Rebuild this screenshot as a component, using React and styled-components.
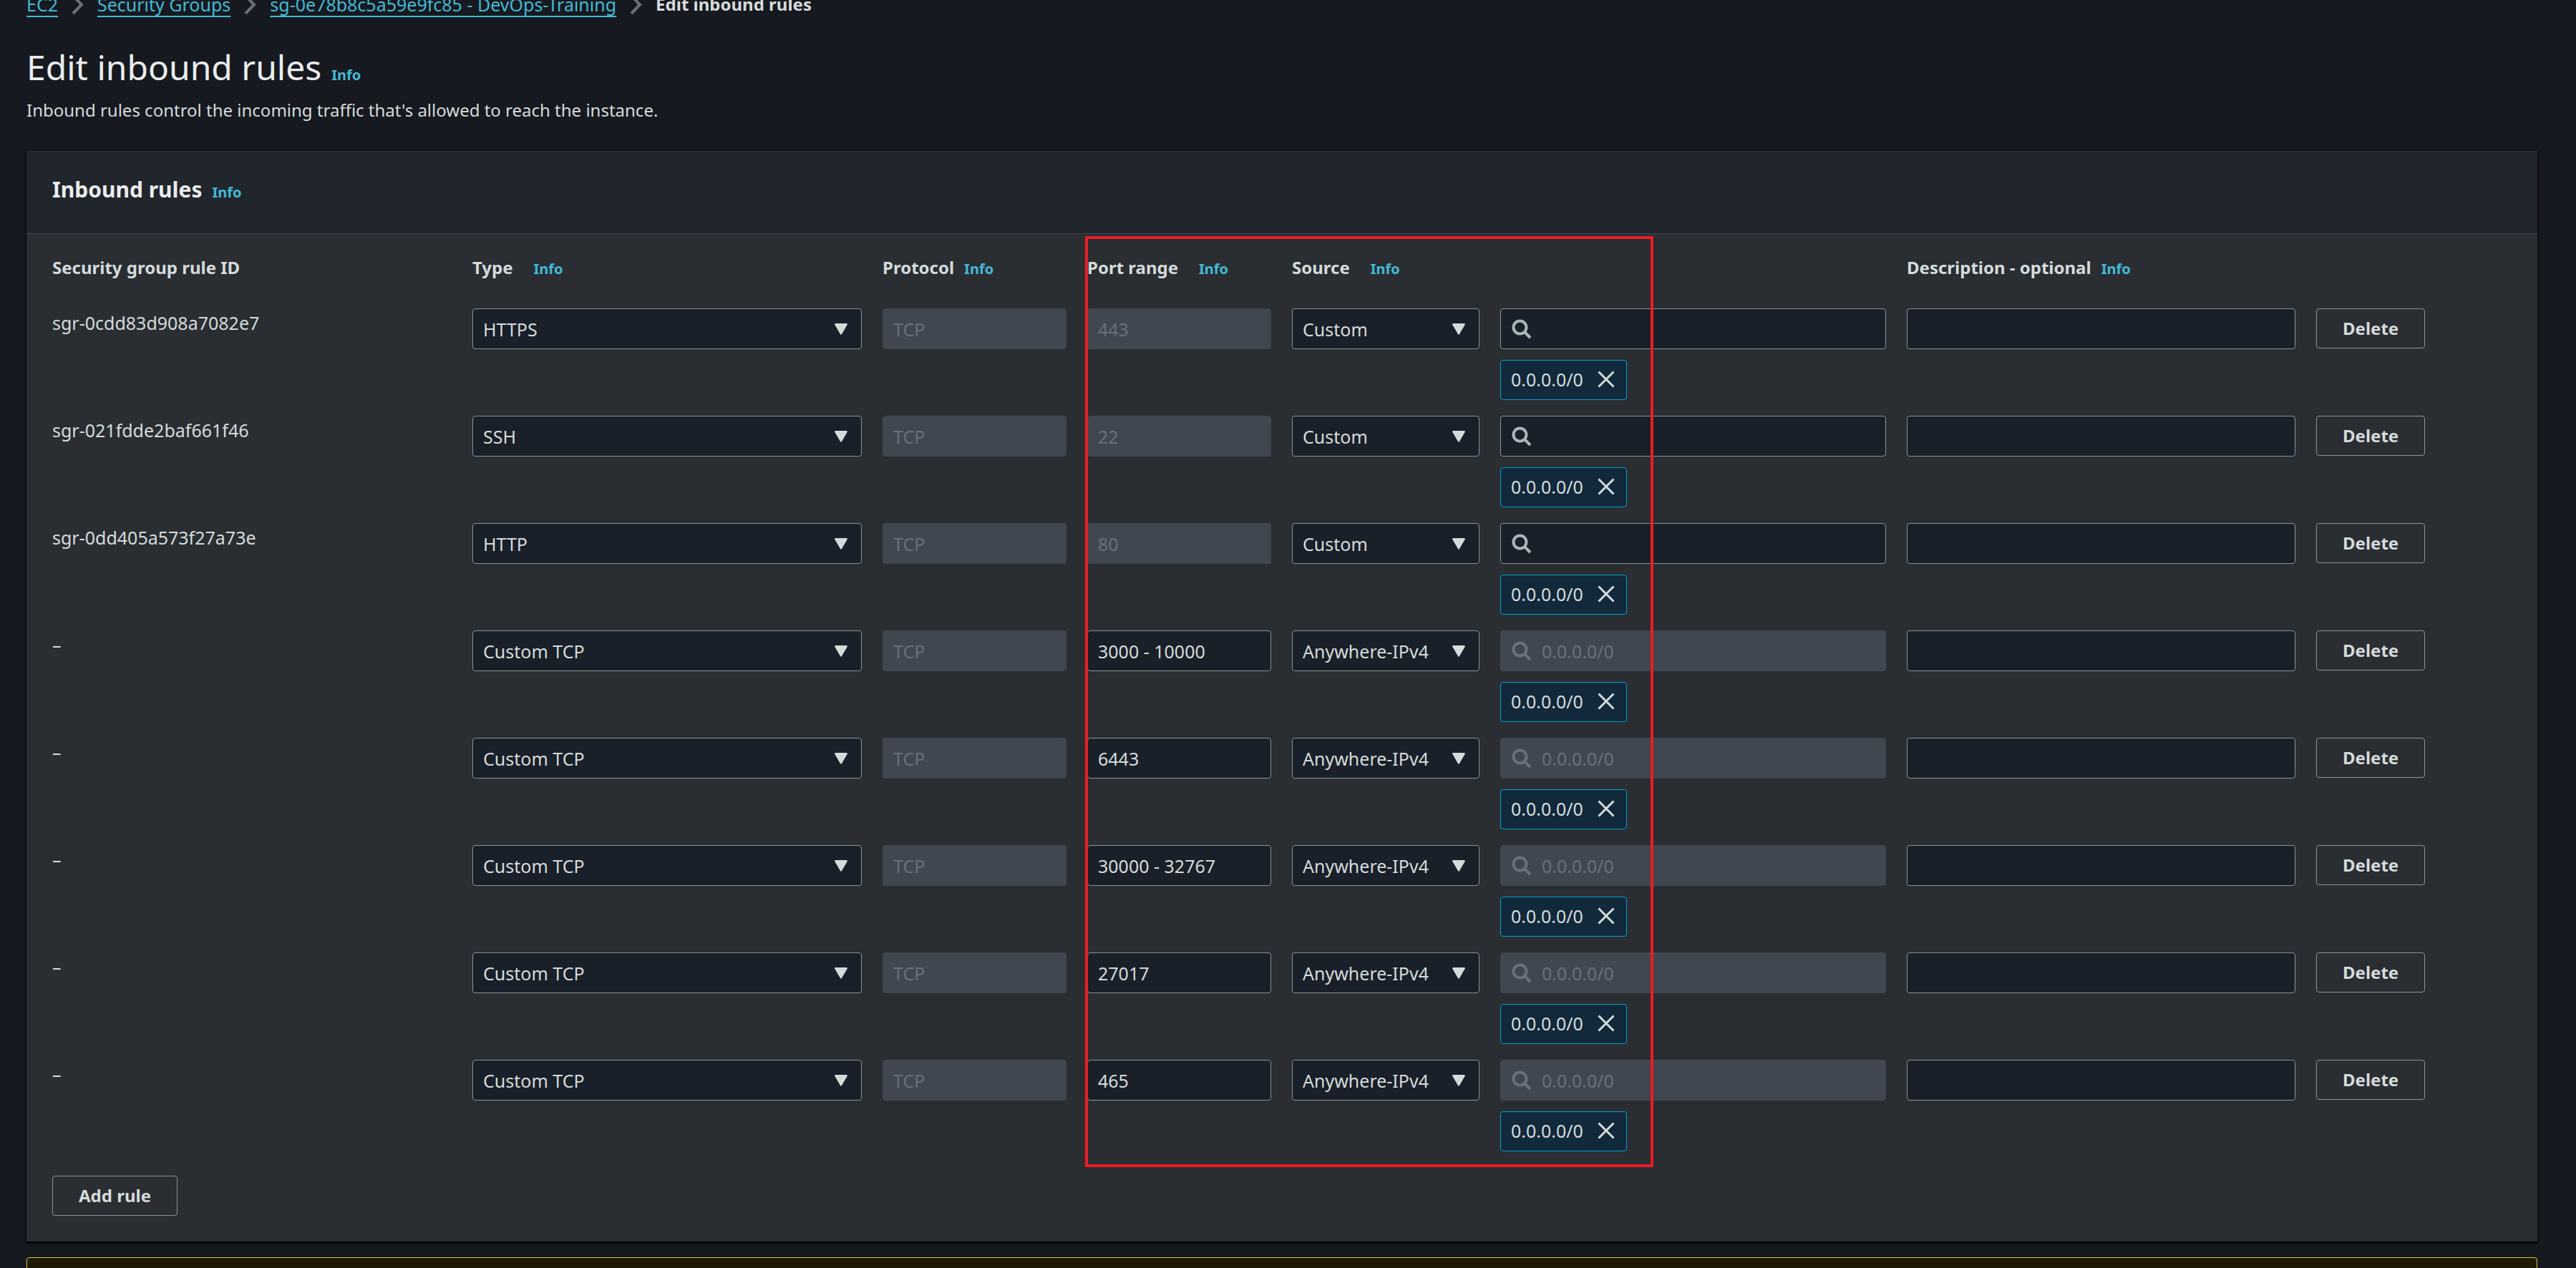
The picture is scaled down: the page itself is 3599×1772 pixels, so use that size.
import React, { useState } from "react";
import styled, { createGlobalStyle, css } from "styled-components";

const color = {
  page: "#16191f",
  panel: "#2a2e33",
  panelHeader: "#21252c",
  line: "#414750",
  field: "#1a2029",
  fieldBorder: "#879596",
  disabled: "#414750",
  disabledText: "#687078",
  text: "#d5dbdb",
  heading: "#eaeded",
  link: "#44b9d6",
  icon: "#aab7b8",
  tokenBg: "#12293b",
  tokenBorder: "#00a1c9",
  marker: "#ec1c24",
};

const GlobalStyle = createGlobalStyle`
  *, *::before, *::after { box-sizing: border-box; }
  html { background: ${color.page}; }
  body {
    margin: 0;
    height: 100vh;
    overflow: hidden;
    background: ${color.page};
    color: ${color.text};
    font-family: "Noto Sans", "Open Sans", sans-serif;
    font-size: 25px;
    line-height: 40px;
  }
  button, input, select { font: inherit; color: inherit; }
`;

const Page = styled.main`
  padding: 0 54px 0 37px;
`;

const Breadcrumbs = styled.nav`
  margin-top: -14px;
  ol {
    display: flex;
    align-items: center;
    gap: 19px;
    margin: 0;
    padding: 0;
    list-style: none;
  }
  li {
    display: flex;
    align-items: center;
    gap: 19px;
  }
`;

const Crumb = styled.a`
  color: ${color.link};
  text-decoration: underline;
  text-decoration-thickness: 2px;
  text-underline-offset: 6px;
  text-decoration-skip-ink: none;
`;

const CurrentCrumb = styled.span`
  font-size: 24px;
  font-weight: 700;
`;

const Title = styled.h1`
  margin: 37px 0 9px;
  color: ${color.heading};
  font-size: 48px;
  line-height: 62px;
  font-weight: 400;
`;

const Intro = styled.p`
  margin: 0 0 37px;
  font-size: 24px;
`;

const InfoLink = styled.a`
  margin-left: ${(p) => (p.$wide ? 29 : 14)}px;
  color: ${color.link};
  font-size: 20px;
  line-height: 1;
  font-weight: 700;
  text-decoration: none;
`;

const Panel = styled.section`
  background: ${color.panel};
  border-top: 1px solid #2f3337;
  box-shadow: 0 2px 2px #000, 1px 1px 2px rgba(0, 0, 0, 0.6), -1px 1px 2px rgba(0, 0, 0, 0.6);
`;

const PanelHeader = styled.header`
  padding: 33px 36px 41px;
  background: ${color.panelHeader};
  border-bottom: 1px solid ${color.line};
`;

const PanelTitle = styled.h2`
  margin: 0;
  color: ${color.heading};
  font-size: 30px;
  line-height: 40px;
  font-weight: 700;
`;

const PanelBody = styled.div`
  padding: 0 36px 36px;
`;

const TableArea = styled.div`
  position: relative;
  margin-bottom: 12px;
`;

const RulesTable = styled.table`
  width: 100%;
  table-layout: fixed;
  border-collapse: collapse;
`;

const HeadCell = styled.th`
  padding: 27px 0 37px;
  text-align: left;
  font-size: 24px;
  font-weight: 700;
  white-space: nowrap;
`;

const Cell = styled.td`
  padding: 0 29px 22px 0;
  vertical-align: top;
`;

const Marker = styled.div`
  position: absolute;
  top: 3px;
  bottom: 0;
  left: 42%;
  width: 23.1%;
  border: 4px solid ${color.marker};
  pointer-events: none;
`;

const FieldWrap = styled.div`
  position: relative;
  display: flex;
  align-items: center;
`;

const fieldStyle = css`
  display: block;
  width: 100%;
  height: 57px;
  margin: 0;
  padding: 0 14px;
  background: ${color.field};
  border: 1px solid ${color.fieldBorder};
  border-radius: 4px;
  outline: none;
  &:disabled {
    background: ${color.disabled};
    border-color: ${color.disabled};
    color: ${color.disabledText};
    opacity: 1;
  }
`;

const TextField = styled.input`
  ${fieldStyle}
`;

const SearchField = styled.input`
  ${fieldStyle}
  padding-left: 57px;
`;

const SelectField = styled.select`
  ${fieldStyle}
  appearance: none;
`;

const Arrow = styled.svg`
  position: absolute;
  right: 20px;
  width: 18px;
  height: 16px;
  fill: ${color.text};
  pointer-events: none;
`;

const SearchGlyph = styled.svg`
  position: absolute;
  left: 16px;
  width: 28px;
  height: 28px;
  fill: none;
  stroke: ${(p) => (p.$muted ? color.disabledText : color.icon)};
  stroke-width: 4;
  pointer-events: none;
`;

const Token = styled.div`
  display: inline-flex;
  align-items: center;
  gap: 20px;
  height: 56px;
  margin-top: 15px;
  padding: 0 16px 3px 14px;
  vertical-align: top;
  background: ${color.tokenBg};
  border: 1px solid ${color.tokenBorder};
  border-radius: 4px;
`;

const IconButton = styled.button`
  display: flex;
  padding: 0;
  background: none;
  border: 0;
  svg {
    width: 24px;
    height: 24px;
    stroke: ${color.text};
    stroke-width: 3;
  }
`;

const Button = styled.button`
  height: 56px;
  padding: 0 36px;
  background: transparent;
  border: 1px solid ${color.fieldBorder};
  border-radius: 4px;
  font-size: 24px;
  font-weight: 700;
  white-space: nowrap;
`;

const Warning = styled.section`
  height: 120px;
  margin-top: 22px;
  background: #1d1906;
  border: 1px solid #e3c53c;
  border-radius: 4px;
`;

const crumbs = ["EC2", "Security Groups", "sg-0e78b8c5a59e9fc85 - DevOps-Training"];

const columns = [
  { label: "Security group rule ID", width: 587 },
  { label: "Type", width: 573, info: true, wide: true },
  { label: "Protocol", width: 286, info: true },
  { label: "Port range", width: 286, info: true, wide: true },
  { label: "Source", width: 291, info: true, wide: true },
  { label: "", width: 568 },
  { label: "Description - optional", width: 572, info: true },
  { label: "", width: 273 },
];

const initialRules = [
  { id: "sgr-0cdd83d908a7082e7", type: "HTTPS", port: "443" },
  { id: "sgr-021fdde2baf661f46", type: "SSH", port: "22" },
  { id: "sgr-0dd405a573f27a73e", type: "HTTP", port: "80" },
  { type: "Custom TCP", port: "3000 - 10000" },
  { type: "Custom TCP", port: "6443" },
  { type: "Custom TCP", port: "30000 - 32767" },
  { type: "Custom TCP", port: "27017" },
  { type: "Custom TCP", port: "465" },
].map((rule, key) => ({ ...rule, key }));

function Chevron() {
  return (
    <svg width="17" height="27" viewBox="0 0 17 27" fill="none" stroke="#687078" strokeWidth="4" aria-hidden="true">
      <path d="M2 1 L14 13.5 L2 26" />
    </svg>
  );
}

function Info({ wide }) {
  return (
    <InfoLink href="#info" $wide={wide}>
      Info
    </InfoLink>
  );
}

function Select({ label, value, options }) {
  return (
    <FieldWrap>
      <SelectField aria-label={label} defaultValue={value}>
        {options.map((option) => (
          <option key={option}>{option}</option>
        ))}
      </SelectField>
      <Arrow viewBox="0 0 18 16" aria-hidden="true">
        <path d="M1.2 0 H16.8 Q18.4 0.4 17.6 2 L10 15 Q9 16.4 8 15 L0.4 2 Q-0.4 0.4 1.2 0 Z" />
      </Arrow>
    </FieldWrap>
  );
}

function RuleRow({ rule, onDelete }) {
  const saved = Boolean(rule.id);
  return (
    <tr>
      <Cell>{rule.id || "–"}</Cell>
      <Cell>
        <Select label="Type" value={rule.type} options={["Custom TCP", "HTTP", "HTTPS", "SSH"]} />
      </Cell>
      <Cell>
        <TextField aria-label="Protocol" defaultValue="TCP" disabled />
      </Cell>
      <Cell>
        <TextField aria-label="Port range" defaultValue={rule.port} disabled={saved} />
      </Cell>
      <Cell>
        <Select label="Source" value={saved ? "Custom" : "Anywhere-IPv4"} options={["Custom", "Anywhere-IPv4"]} />
      </Cell>
      <Cell>
        <FieldWrap>
          <SearchField aria-label="Source address" defaultValue={saved ? "" : "0.0.0.0/0"} disabled={!saved} />
          <SearchGlyph $muted={!saved} viewBox="0 0 28 28" aria-hidden="true">
            <circle cx="11.5" cy="11.5" r="9" />
            <path d="M17.5 17.5 L26 26" />
          </SearchGlyph>
        </FieldWrap>
        <Token>
          <span>0.0.0.0/0</span>
          <IconButton aria-label="Remove 0.0.0.0/0">
            <svg viewBox="0 0 24 24" aria-hidden="true">
              <path d="M1.5 1.5 L22.5 22.5 M22.5 1.5 L1.5 22.5" />
            </svg>
          </IconButton>
        </Token>
      </Cell>
      <Cell>
        <TextField aria-label="Description" />
      </Cell>
      <Cell>
        <Button onClick={onDelete}>Delete</Button>
      </Cell>
    </tr>
  );
}

export default function App() {
  const [rules, setRules] = useState(initialRules);
  const removeRule = (key) => setRules(rules.filter((rule) => rule.key !== key));
  const addRule = () => setRules([...rules, { type: "Custom TCP", port: "0", key: Date.now() }]);

  return (
    <>
      <GlobalStyle />
      <Page>
        <Breadcrumbs aria-label="Breadcrumbs">
          <ol>
            {crumbs.map((crumb) => (
              <li key={crumb}>
                <Crumb href="#">{crumb}</Crumb>
                <Chevron />
              </li>
            ))}
            <li>
              <CurrentCrumb>Edit inbound rules</CurrentCrumb>
            </li>
          </ol>
        </Breadcrumbs>
        <Title>
          Edit inbound rules
          <Info />
        </Title>
        <Intro>Inbound rules control the incoming traffic that's allowed to reach the instance.</Intro>
        <Panel>
          <PanelHeader>
            <PanelTitle>
              Inbound rules
              <Info />
            </PanelTitle>
          </PanelHeader>
          <PanelBody>
            <TableArea>
              <RulesTable>
                <colgroup>
                  {columns.map((column, i) => (
                    <col key={i} width={column.width} />
                  ))}
                </colgroup>
                <thead>
                  <tr>
                    {columns.map((column, i) => (
                      <HeadCell key={i} scope="col">
                        {column.label}
                        {column.info && <Info wide={column.wide} />}
                      </HeadCell>
                    ))}
                  </tr>
                </thead>
                <tbody>
                  {rules.map((rule) => (
                    <RuleRow key={rule.key} rule={rule} onDelete={() => removeRule(rule.key)} />
                  ))}
                </tbody>
              </RulesTable>
              <Marker />
            </TableArea>
            <Button onClick={addRule}>Add rule</Button>
          </PanelBody>
        </Panel>
        <Warning aria-label="Warning" />
      </Page>
    </>
  );
}
